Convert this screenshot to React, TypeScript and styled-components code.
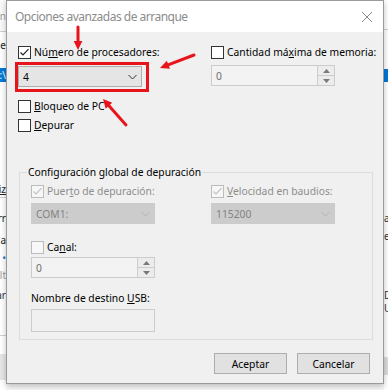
import React from "react";
import styled, { createGlobalStyle } from "styled-components";

const GlobalStyle = createGlobalStyle`
  html, body {
    margin: 0;
    padding: 0;
    width: 388px;
    height: 390px;
    overflow: hidden;
    background: #ffffff;
    font-family: "Noto Sans", "Open Sans", sans-serif;
  }
`;

// background window pieces peeking out at the sides
const leftBits = [
  { h: 32, text: "Opcion", color: "#9a9a9a", bg: "#fafafa", line: true },
  { h: 4 },
  { h: 18, text: "Bloque", color: "#222" },
  { h: 14 },
  { h: 14, text: "C:\\", color: "#fff", bg: "#0078d7" },
  { h: 98 },
  { h: 18, text: "Analiz", color: "#222", under: true, line: true },
  { h: 11 },
  { h: 18, text: "Arr", color: "#222" },
  { h: 4 },
  { h: 18, text: "Pa", color: "#222" },
  { h: 4 },
  { h: 10, text: "•", color: "#2a6fd0" },
  { h: 4 },
  { h: 16, text: "Alt", color: "#999" },
  { h: 4 },
  { h: 16, text: "Par", color: "#333" },
  { h: 33, line: true },
  { h: 18 },
  { h: 26, bg: "#e6e6e6" },
];

const rightBits = [
  { h: 30, bg: "#ffffff", line: true },
  { h: 39 },
  { h: 13, text: "", bg: "#0078d7" },
  { h: 128 },
  { h: 16, text: "ab", color: "#333" },
  { h: 2 },
  { h: 16, text: "en", color: "#333" },
  { h: 45 },
  { h: 11, text: "Di", color: "#333" },
  { h: 2 },
  { h: 11, text: "Un", color: "#333" },
  { h: 44 },
  { h: 18, bg: "#dcdcdc" },
];

type Bit = { h: number; text?: string; color?: string; bg?: string; line?: boolean; under?: boolean };

function App() {
  return (
    <>
      <GlobalStyle />
      <Screen>
        <Strip $w={6} $side="left">
          {leftBits.map((b: Bit, i) => (
            <StripRow key={i} $h={b.h} $color={b.color} $bg={b.bg} $line={b.line} $under={b.under} $side="left">
              <span>{b.text}</span>
            </StripRow>
          ))}
        </Strip>

        <Dialog>
          <TitleBar>
            <TitleText>Opciones avanzadas de arranque</TitleText>
            <svg width="12" height="12" viewBox="0 0 12 12">
              <path d="M1 1 L11 11 M11 1 L1 11" stroke="#8a8a8a" strokeWidth="1" fill="none" />
            </svg>
          </TitleBar>

          <Body>
            <TopGrid>
              <Column>
                <CheckRow>
                  <Check checked />
                  <Label>Nú<u>m</u>ero de procesadores:</Label>
                </CheckRow>
                <Combo $mt={6}>
                  <span>4</span>
                  <Chevron color="#333" />
                </Combo>
                <CheckRow $mt={11}>
                  <Check />
                  <Label><u>B</u>loqueo de PC</Label>
                </CheckRow>
                <CheckRow $mt={3}>
                  <Check />
                  <Label><u>D</u>epurar</Label>
                </CheckRow>
              </Column>
              <Column>
                <CheckRow>
                  <Check />
                  <Label>Cantidad má<u>x</u>ima de memoria:</Label>
                </CheckRow>
                <Spin $mt={5} />
              </Column>
            </TopGrid>

            <Group>
              <Legend>Configuración global de depuración</Legend>
              <GroupGrid>
                <Column>
                  <CheckRow>
                    <Check checked disabled />
                    <Label $disabled>Puer<u>t</u>o de depuración:</Label>
                  </CheckRow>
                  <Combo $mt={4} $disabled>
                    <span>COM1:</span>
                    <Chevron color="#b5b5b5" />
                  </Combo>
                  <CheckRow $mt={15}>
                    <Check disabled />
                    <Label>Ca<u>n</u>al:</Label>
                  </CheckRow>
                  <Spin $mt={2} />
                  <PlainLabel>Nombre de destino <u>U</u>SB:</PlainLabel>
                  <TextBox />
                </Column>
                <Column>
                  <CheckRow>
                    <Check checked disabled />
                    <Label $disabled><u>V</u>elocidad en baudios:</Label>
                  </CheckRow>
                  <Combo $mt={4} $disabled>
                    <span>115200</span>
                    <Chevron color="#b5b5b5" />
                  </Combo>
                </Column>
              </GroupGrid>
            </Group>

            <ButtonRow>
              <Button>Aceptar</Button>
              <Button>Cancelar</Button>
            </ButtonRow>
          </Body>
        </Dialog>

        <Strip $w={4} $side="right">
          {rightBits.map((b: Bit, i) => (
            <StripRow key={i} $h={b.h} $color={b.color} $bg={b.bg} $line={b.line} $side="right">
              <span>{b.text}</span>
            </StripRow>
          ))}
        </Strip>

        <Annotations width="388" height="390" viewBox="0 0 388 390">
          <rect x="16.5" y="63.5" width="131" height="27" fill="none" stroke="#e8141c" strokeWidth="3" />
          <Arrow x1={78} y1={27} x2={78} y2={50} />
          <Arrow x1={194} y1={55} x2={160} y2={68} />
          <Arrow x1={126} y1={125} x2={103} y2={99} />
        </Annotations>
      </Screen>
    </>
  );
}

function Arrow({ x1, y1, x2, y2 }: { x1: number; y1: number; x2: number; y2: number }) {
  const a = Math.atan2(y2 - y1, x2 - x1);
  const len = 10;
  const wide = 0.45;
  const p1 = [x2 - len * Math.cos(a - wide), y2 - len * Math.sin(a - wide)];
  const p2 = [x2 - len * Math.cos(a + wide), y2 - len * Math.sin(a + wide)];
  const bx = x2 - (len - 2) * Math.cos(a);
  const by = y2 - (len - 2) * Math.sin(a);
  return (
    <g>
      <line x1={x1} y1={y1} x2={bx} y2={by} stroke="#e8141c" strokeWidth="3" strokeLinecap="round" />
      <polygon points={`${x2},${y2} ${p1[0]},${p1[1]} ${p2[0]},${p2[1]}`} fill="#e8141c" />
    </g>
  );
}

function Check({ checked, disabled }: { checked?: boolean; disabled?: boolean }) {
  return (
    <Box $disabled={disabled}>
      {checked && (
        <svg width="11" height="11" viewBox="0 0 11 11">
          <path d="M1.5 5.5 L4 8 L9.5 2.2" stroke={disabled ? "#c2c2c2" : "#222"} strokeWidth="1.2" fill="none" />
        </svg>
      )}
    </Box>
  );
}

function Chevron({ color }: { color: string }) {
  return (
    <svg width="9" height="6" viewBox="0 0 9 6">
      <path d="M0.5 1 L4.5 5 L8.5 1" stroke={color} strokeWidth="1" fill="none" />
    </svg>
  );
}

function Spin({ $mt }: { $mt: number }) {
  return (
    <SpinBox $mt={$mt}>
      <SpinValue>0</SpinValue>
      <SpinButtons>
        <SpinButton>
          <svg width="7" height="4" viewBox="0 0 7 4"><path d="M0 4 L3.5 0 L7 4 Z" fill="#7a7a7a" /></svg>
        </SpinButton>
        <SpinButton>
          <svg width="7" height="4" viewBox="0 0 7 4"><path d="M0 0 L3.5 4 L7 0 Z" fill="#7a7a7a" /></svg>
        </SpinButton>
      </SpinButtons>
    </SpinBox>
  );
}

const Screen = styled.div`
  position: relative;
  display: flex;
  width: 388px;
  height: 390px;
  background: #f7f7f7;
`;

const Strip = styled.div<{ $w: number; $side: string }>`
  width: ${p => p.$w}px;
  flex: none;
  display: flex;
  flex-direction: column;
  overflow: hidden;
  background: #ffffff;
`;

const StripRow = styled.div<{ $h: number; $color?: string; $bg?: string; $line?: boolean; $under?: boolean; $side: string }>`
  height: ${p => p.$h}px;
  flex: none;
  display: flex;
  align-items: center;
  justify-content: ${p => (p.$side === "left" ? "flex-end" : "flex-start")};
  overflow: hidden;
  white-space: nowrap;
  font-size: 10px;
  line-height: 10px;
  color: ${p => p.$color || "#222"};
  background: ${p => p.$bg || "transparent"};
  border-bottom: ${p => (p.$line ? "1px solid #d0d0d0" : "none")};
  box-sizing: border-box;
  text-decoration: ${p => (p.$under ? "underline" : "none")};
  span { flex: none; }
`;

const Dialog = styled.div`
  width: 378px;
  height: 384px;
  flex: none;
  box-sizing: border-box;
  display: flex;
  flex-direction: column;
  background: #f0f0f0;
  border: 1px solid #9a9a9a;
  box-shadow: 0 2px 6px rgba(0, 0, 0, 0.25);
  z-index: 1;
`;

const TitleBar = styled.div`
  height: 31px;
  flex: none;
  display: flex;
  align-items: center;
  justify-content: space-between;
  padding: 0 10px 0 8px;
  background: #ffffff;
`;

const TitleText = styled.span`
  font-size: 12px;
  letter-spacing: -0.5px;
  color: #8c8c8c;
`;

const Body = styled.div`
  flex: 1;
  display: flex;
  flex-direction: column;
  padding: 12px 12px 0 11px;
  font-size: 10.3px;
  color: #000;
`;

const TopGrid = styled.div`
  display: grid;
  grid-template-columns: 193px 124px;
`;

const Column = styled.div`
  display: flex;
  flex-direction: column;
  align-items: flex-start;
`;

const CheckRow = styled.div<{ $mt?: number }>`
  display: flex;
  align-items: center;
  height: 16px;
  margin-top: ${p => p.$mt || 0}px;
`;

const Box = styled.div<{ $disabled?: boolean }>`
  width: 13px;
  height: 13px;
  flex: none;
  box-sizing: border-box;
  border: 1px solid ${p => (p.$disabled ? "#bcbcbc" : "#333333")};
  background: ${p => (p.$disabled ? "#f7f7f7" : "#ffffff")};
  display: flex;
  align-items: center;
  justify-content: center;
  margin-right: 3px;
`;

const Label = styled.span<{ $disabled?: boolean }>`
  font-size: 10.3px;
  color: ${p => (p.$disabled ? "#8d8d8d" : "#000")};
  white-space: nowrap;
`;

const Combo = styled.div<{ $mt?: number; $disabled?: boolean }>`
  width: 124px;
  height: 21px;
  margin-top: ${p => p.$mt || 0}px;
  box-sizing: border-box;
  display: flex;
  align-items: center;
  justify-content: space-between;
  padding: 0 4px 0 4px;
  background: ${p => (p.$disabled ? "#cccccc" : "#e5e5e5")};
  border: 1px solid ${p => (p.$disabled ? "#cccccc" : "#adadad")};
  color: ${p => (p.$disabled ? "#838383" : "#000")};
  font-size: 10.3px;
`;

const SpinBox = styled.div<{ $mt?: number }>`
  width: 124px;
  height: 21px;
  margin-top: ${p => p.$mt || 0}px;
  box-sizing: border-box;
  display: flex;
  align-items: stretch;
  background: #f3f3f3;
  border: 1px solid #cccccc;
`;

const SpinValue = styled.span`
  flex: 1;
  display: flex;
  align-items: center;
  padding-left: 4px;
  color: #6d6d6d;
  font-size: 10.3px;
`;

const SpinButtons = styled.div`
  width: 16px;
  display: flex;
  flex-direction: column;
  border-left: 1px solid #cccccc;
`;

const SpinButton = styled.div`
  flex: 1;
  display: flex;
  align-items: center;
  justify-content: center;
  background: #ececec;
  & + & { border-top: 1px solid #cccccc; }
`;

const Group = styled.fieldset`
  margin: 31px 0 0 1px;
  padding: 3px 0 8px 0;
  width: 354px;
  height: 176px;
  box-sizing: border-box;
  border: 1px solid #dcdcdc;
  min-inline-size: 0;
`;

const Legend = styled.legend`
  margin-left: 7px;
  padding: 0 1px;
  font-size: 10.3px;
  line-height: 16px;
  color: #000;
`;

const GroupGrid = styled.div`
  display: grid;
  grid-template-columns: 180px 124px;
  margin-left: 11px;
`;

const PlainLabel = styled.div`
  margin-top: 12px;
  height: 16px;
  line-height: 16px;
  white-space: nowrap;
`;

const TextBox = styled.div`
  margin-top: 3px;
  width: 124px;
  height: 23px;
  box-sizing: border-box;
  background: #f0f0f0;
  border: 1px solid #cccccc;
`;

const ButtonRow = styled.div`
  display: flex;
  justify-content: flex-end;
  gap: 10px;
  margin-top: 13px;
  padding-right: 1px;
`;

const Button = styled.div`
  width: 73px;
  height: 21px;
  box-sizing: border-box;
  display: flex;
  align-items: center;
  justify-content: center;
  background: #e1e1e1;
  border: 1px solid #adadad;
  font-size: 10.3px;
  color: #000;
`;

const Annotations = styled.svg`
  position: absolute;
  left: 0;
  top: 0;
  pointer-events: none;
  z-index: 2;
`;

export default App;
